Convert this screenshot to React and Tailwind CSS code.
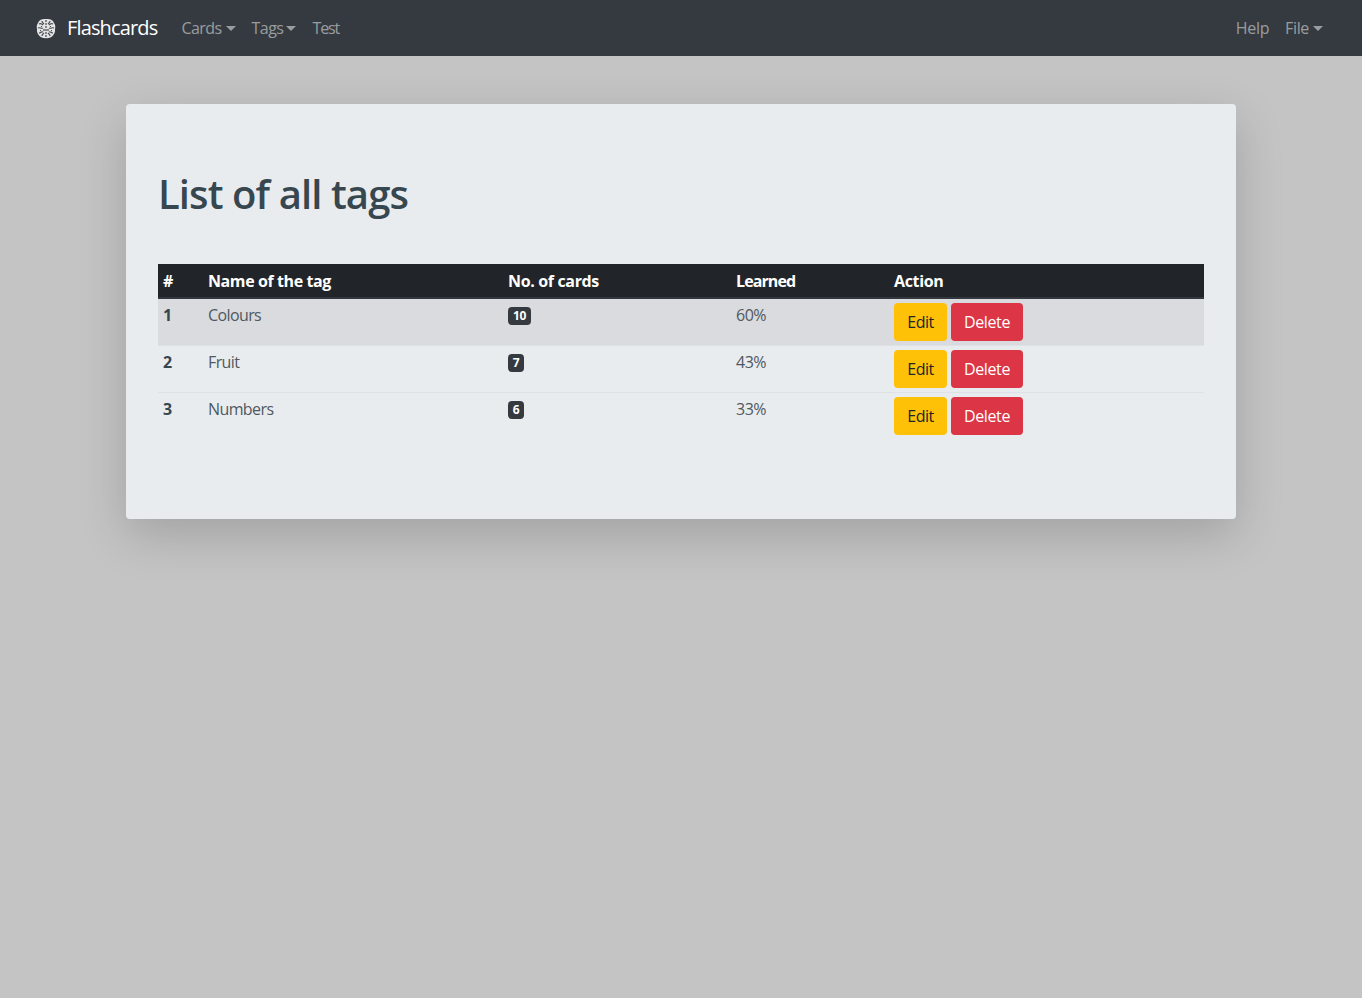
import React from "react";

function Brain() {
  return (
    <svg width="20" height="21" viewBox="0 0 20 21" className="shrink-0">
      <path d="M10 1C6 .5 3 2 2 5 .5 7 .5 9 1 11c-.5 3 1 6 3 7.500 2 1.500 4.500 2 6 1.500 1.500.5 4 0 6-1.500 2-1.500 3.500-4.500 3-7.500.5-2 .5-4-1-6-1-3-4-4.500-8-4z" fill="#e4e4e4" />
      <g stroke="#343a40" strokeWidth="1.2" fill="none" opacity="0.9">
        <path d="M10 2v17" strokeDasharray="2 1" />
        <path d="M3 6c2-1 3 0 4 1M2 10c2-1 3 1 5 0M3 15c2 0 2-2 4-1M6 3c0 2 1 2 2 3M6 18c0-2 1-2 2-3" />
        <path d="M17 6c-2-1-3 0-4 1M18 10c-2-1-3 1-5 0M17 15c-2 0-2-2-4-1M14 3c0 2-1 2-2 3M14 18c0-2-1-2-2-3" />
        <path d="M5 8.500h1M14 8.500h1M8 11v2M12 11v2M4 12.500h1M15 12.500h1" />
      </g>
    </svg>
  );
}

function Caret({ gap }) {
  return <span className={`${gap} inline-block align-[3px] border-x-[5px] border-t-[5px] border-x-transparent border-t-current`} />;
}

function NavLink({ children, caret, track, gap = "ml-[4px]" }) {
  return (
    <a className={`px-2 text-[16px] leading-6 text-[#ffffff80] whitespace-nowrap ${track}`}>
      {children}
      {caret && <Caret gap={gap} />}
    </a>
  );
}

const rows = [
  { n: 1, name: "Colours", c: 10, l: "60%", bg: "bg-[#d9dbde]", w: "w-[23px]" },
  { n: 2, name: "Fruit", c: 7, l: "43%", bg: "", w: "w-[16px]" },
  { n: 3, name: "Numbers", c: 6, l: "33%", bg: "", w: "w-[16px]" },
];

export default function App() {
  return (
    <div className="min-h-[998px] bg-[#c4c4c4] font-['Open_Sans','Noto_Sans',sans-serif] text-[#343a40] tracking-[-0.35px]">
      <nav className="h-14 bg-[#343a40] flex items-center justify-between pl-9 pr-[31px]">
        <div className="flex items-center">
          <a className="flex items-center mr-4">
            <Brain />
            <span className="ml-[11px] text-[20px] leading-[30px] text-white tracking-[-0.85px]">Flashcards</span>
          </a>
          <NavLink caret track="tracking-[-0.55px]">Cards</NavLink>
          <NavLink caret track="tracking-[-0.55px]" gap="ml-[3px]">Tags</NavLink>
          <NavLink track="tracking-[-1.1px]">Test</NavLink>
        </div>
        <div className="flex items-center">
          <NavLink track="tracking-[-0.35px]">Help</NavLink>
          <NavLink caret track="tracking-[-0.35px]">File</NavLink>
        </div>
      </nav>
      <main className="w-[1110px] h-[415px] mt-12 ml-[126px] bg-[#e9ecef] rounded-[4px] p-8 shadow-[0_16px_48px_rgba(0,0,0,0.175)]">
        <h1 className="pt-[34px] pb-[46px] text-[40px] leading-[48px] font-semibold text-[#37474f] tracking-[-0.9px]">List of all tags</h1>
        <table className="w-[1046px] table-fixed border-collapse text-[16px] leading-6">
          <colgroup>
            <col className="w-[50px]" />
            <col className="w-[300px]" />
            <col className="w-[228px]" />
            <col className="w-[158px]" />
            <col />
          </colgroup>
          <thead>
            <tr className="bg-[#212529] text-white h-[34px] border-b-2 border-[#32383e] text-left font-bold">
              <th className="px-[5px] py-0">#</th>
              <th className="px-0 tracking-[-0.4px]">Name of the tag</th>
              <th className="px-0">No. of cards</th>
              <th className="px-0 tracking-[-0.9px]">Learned</th>
              <th className="px-0">Action</th>
            </tr>
          </thead>
          <tbody>
            {rows.map((r, i) => (
              <tr key={r.n} className={`${r.bg} ${i > 0 ? "border-t border-[#dee2e6]" : ""} align-top`}>
                <td className="px-[5px] pt-1 font-bold text-[#37474f]">{r.n}</td>
                <td className="pt-1 font-normal text-[#50585f] tracking-[-0.6px]">{r.name}</td>
                <td className="pt-1">
                  <span className={`${r.w} inline-block mt-[4px] align-top bg-[#343a40] text-white text-center text-[12px] leading-[12px] font-bold rounded-[4px] py-[3px]`}>{r.c}</span>
                </td>
                <td className="pt-1 font-normal text-[#50585f] tracking-[-0.5px]">{r.l}</td>
                <td className="py-1">
                  <div className="flex gap-1">
                    <button className="h-[38px] w-[53px] rounded-[4px] bg-[#ffc107] text-[#212529] text-[16px] font-normal tracking-[-0.5px]">Edit</button>
                    <button className="h-[38px] w-[72px] rounded-[4px] bg-[#dc3545] text-white text-[16px] font-normal">Delete</button>
                  </div>
                </td>
              </tr>
            ))}
          </tbody>
        </table>
      </main>
    </div>
  );
}
